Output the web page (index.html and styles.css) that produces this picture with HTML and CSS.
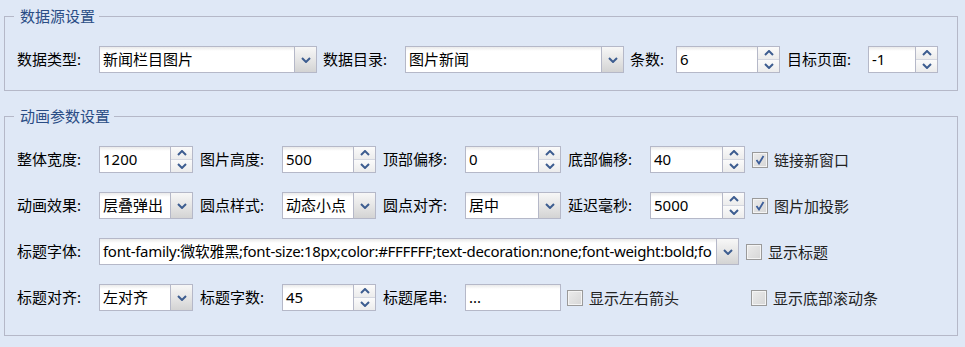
FILE: index.html
```html
<!DOCTYPE html>
<html lang="zh-CN">
<head>
    <meta charset="UTF-8">
    <title>数据源设置</title>
    <link rel="stylesheet" href="styles.css">
</head>
<body>
    <fieldset class="box box-1">
        <legend>数据源设置</legend>
        <div class="row">
            <label class="lbl">数据类型:</label>
            <div class="field w-218">
                <div class="val">新闻栏目图片</div>
                <div class="trig"><svg width="10" height="6" viewBox="0 0 10 6"><path d="M1 1 L5 5 L9 1" /></svg></div>
            </div>
            <label class="lbl lbl-m">数据目录:</label>
            <div class="field w-219">
                <div class="val">图片新闻</div>
                <div class="trig"><svg width="10" height="6" viewBox="0 0 10 6"><path d="M1 1 L5 5 L9 1" /></svg></div>
            </div>
            <label class="lbl lbl-s">条数:</label>
            <div class="field w-104">
                <div class="val">6</div>
                <div class="spin">
                    <span><svg width="10" height="6" viewBox="0 0 10 6"><path d="M1 5 L5 1 L9 5" /></svg></span>
                    <span><svg width="10" height="6" viewBox="0 0 10 6"><path d="M1 1 L5 5 L9 1" /></svg></span>
                </div>
            </div>
            <label class="lbl lbl-n">目标页面:</label>
            <div class="field w-70">
                <div class="val">-1</div>
                <div class="spin">
                    <span><svg width="10" height="6" viewBox="0 0 10 6"><path d="M1 5 L5 1 L9 5" /></svg></span>
                    <span><svg width="10" height="6" viewBox="0 0 10 6"><path d="M1 1 L5 5 L9 1" /></svg></span>
                </div>
            </div>
        </div>
    </fieldset>

    <fieldset class="box box-2">
        <legend>动画参数设置</legend>
        <div class="row">
            <label class="lbl">整体宽度:</label>
            <div class="field w-94">
                <div class="val">1200</div>
                <div class="spin">
                    <span><svg width="10" height="6" viewBox="0 0 10 6"><path d="M1 5 L5 1 L9 5" /></svg></span>
                    <span><svg width="10" height="6" viewBox="0 0 10 6"><path d="M1 1 L5 5 L9 1" /></svg></span>
                </div>
            </div>
            <label class="lbl">图片高度:</label>
            <div class="field w-94">
                <div class="val">500</div>
                <div class="spin">
                    <span><svg width="10" height="6" viewBox="0 0 10 6"><path d="M1 5 L5 1 L9 5" /></svg></span>
                    <span><svg width="10" height="6" viewBox="0 0 10 6"><path d="M1 1 L5 5 L9 1" /></svg></span>
                </div>
            </div>
            <label class="lbl">顶部偏移:</label>
            <div class="field w-96">
                <div class="val">0</div>
                <div class="spin">
                    <span><svg width="10" height="6" viewBox="0 0 10 6"><path d="M1 5 L5 1 L9 5" /></svg></span>
                    <span><svg width="10" height="6" viewBox="0 0 10 6"><path d="M1 1 L5 5 L9 1" /></svg></span>
                </div>
            </div>
            <label class="lbl">底部偏移:</label>
            <div class="field w-95">
                <div class="val">40</div>
                <div class="spin">
                    <span><svg width="10" height="6" viewBox="0 0 10 6"><path d="M1 5 L5 1 L9 5" /></svg></span>
                    <span><svg width="10" height="6" viewBox="0 0 10 6"><path d="M1 1 L5 5 L9 1" /></svg></span>
                </div>
            </div>
            <div class="chk on"><svg width="10" height="10" viewBox="0 0 10 10"><path d="M1.5 5 L4 8.5 L8.5 1" /></svg></div>
            <span class="chk-lbl">链接新窗口</span>
        </div>

        <div class="row">
            <label class="lbl">动画效果:</label>
            <div class="field w-94">
                <div class="val">层叠弹出</div>
                <div class="trig"><svg width="10" height="6" viewBox="0 0 10 6"><path d="M1 1 L5 5 L9 1" /></svg></div>
            </div>
            <label class="lbl">圆点样式:</label>
            <div class="field w-94">
                <div class="val">动态小点</div>
                <div class="trig"><svg width="10" height="6" viewBox="0 0 10 6"><path d="M1 1 L5 5 L9 1" /></svg></div>
            </div>
            <label class="lbl">圆点对齐:</label>
            <div class="field w-96">
                <div class="val">居中</div>
                <div class="trig"><svg width="10" height="6" viewBox="0 0 10 6"><path d="M1 1 L5 5 L9 1" /></svg></div>
            </div>
            <label class="lbl">延迟毫秒:</label>
            <div class="field w-95">
                <div class="val">5000</div>
                <div class="spin">
                    <span><svg width="10" height="6" viewBox="0 0 10 6"><path d="M1 5 L5 1 L9 5" /></svg></span>
                    <span><svg width="10" height="6" viewBox="0 0 10 6"><path d="M1 1 L5 5 L9 1" /></svg></span>
                </div>
            </div>
            <div class="chk on"><svg width="10" height="10" viewBox="0 0 10 10"><path d="M1.5 5 L4 8.5 L8.5 1" /></svg></div>
            <span class="chk-lbl">图片加投影</span>
        </div>

        <div class="row">
            <label class="lbl">标题字体:</label>
            <div class="field w-640">
                <div class="val val-long">font-family:微软雅黑;font-size:18px;color:#FFFFFF;text-decoration:none;font-weight:bold;fo</div>
                <div class="trig"><svg width="10" height="6" viewBox="0 0 10 6"><path d="M1 1 L5 5 L9 1" /></svg></div>
            </div>
            <div class="chk"></div>
            <span class="chk-lbl">显示标题</span>
        </div>

        <div class="row">
            <label class="lbl">标题对齐:</label>
            <div class="field w-94">
                <div class="val">左对齐</div>
                <div class="trig"><svg width="10" height="6" viewBox="0 0 10 6"><path d="M1 1 L5 5 L9 1" /></svg></div>
            </div>
            <label class="lbl">标题字数:</label>
            <div class="field w-94">
                <div class="val">45</div>
                <div class="spin">
                    <span><svg width="10" height="6" viewBox="0 0 10 6"><path d="M1 5 L5 1 L9 5" /></svg></span>
                    <span><svg width="10" height="6" viewBox="0 0 10 6"><path d="M1 1 L5 5 L9 1" /></svg></span>
                </div>
            </div>
            <label class="lbl">标题尾串:</label>
            <div class="field w-96 text-only">
                <div class="val">...</div>
            </div>
            <div class="chk-group">
                <div class="chk"></div>
                <span class="chk-lbl">显示左右箭头</span>
            </div>
            <div class="chk"></div>
            <span class="chk-lbl">显示底部滚动条</span>
        </div>
    </fieldset>
</body>
</html>
```

FILE: styles.css
```css
body {
    margin: 0;
    background-color: #dfe8f6;
    font-family: "Noto Sans", "Noto Sans CJK SC", sans-serif;
    font-size: 15px;
    color: #000;
}
.box {
    margin: 0 0 0 4px;
    width: 954px;
    box-sizing: border-box;
    border: 1px solid #b5b8c8;
    padding: 21px 0 17px 12px;
    min-width: 0;
}
.box-1 {
    margin-top: 7px;
}
.box-2 {
    margin-top: 16px;
    padding-bottom: 24px;
}
.box legend {
    margin-left: -3px;
    padding: 0 4px 0 6px;
    height: 18px;
    line-height: 18px;
    color: #2a4d85;
}
.row {
    display: flex;
    align-items: center;
    height: 27px;
    margin-bottom: 19px;
    white-space: nowrap;
}
.row:last-child {
    margin-bottom: 0;
}
.lbl {
    width: 82px;
    flex: none;
    line-height: 27px;
}
.lbl-m { width: 82px; }
.lbl-s { width: 46px; }
.lbl-n { width: 81px; }

.field {
    display: flex;
    height: 27px;
    box-sizing: border-box;
    border: 1px solid #b5b8c8;
    background: linear-gradient(#eaeaea, #ffffff 4px, #ffffff);
    margin-right: 7px;
    flex: none;
    overflow: hidden;
}
.w-218 { width: 218px; margin-right: 6px; }
.w-219 { width: 219px; margin-right: 6px; }
.w-104 { width: 104px; }
.w-70 { width: 70px; }
.w-94 { width: 94px; }
.w-95 { width: 95px; }
.w-96 { width: 96px; }
.w-640 { width: 640px; }

.val {
    flex: 1;
    min-width: 0;
    padding-left: 3px;
    line-height: 25px;
    overflow: hidden;
}
.val-long {
    letter-spacing: -0.3px;
}
.trig {
    width: 21px;
    flex: none;
    border-left: 1px solid #b5b8c8;
    background: linear-gradient(#f7f7f7, #e6e6e6 50%, #d3d3d3);
    display: flex;
    align-items: center;
    justify-content: center;
}
.spin {
    width: 21px;
    flex: none;
    border-left: 1px solid #b5b8c8;
    display: flex;
    flex-direction: column;
}
.spin span {
    flex: 1;
    display: flex;
    align-items: center;
    justify-content: center;
    background: linear-gradient(#fbfbfb, #ececec);
}
.spin span + span {
    border-top: 1px solid #d4d7e0;
}
.trig svg path, .spin svg path {
    fill: none;
    stroke: #3d5d90;
    stroke-width: 2;
}
.chk {
    width: 16px;
    height: 16px;
    box-sizing: border-box;
    border: 1px solid #9a9a9a;
    background: linear-gradient(135deg, #ececec, #d6d6d6);
    box-shadow: inset 0 0 0 1px #f4f4f4;
    display: flex;
    align-items: center;
    justify-content: center;
    flex: none;
}
.chk svg path {
    fill: none;
    stroke: #3c5e9a;
    stroke-width: 1.8;
}
.chk-lbl {
    margin-left: 6px;
    color: #222;
}
.chk-group {
    width: 184px;
    display: flex;
    align-items: center;
    flex: none;
    margin-left: -1px;
}
```
